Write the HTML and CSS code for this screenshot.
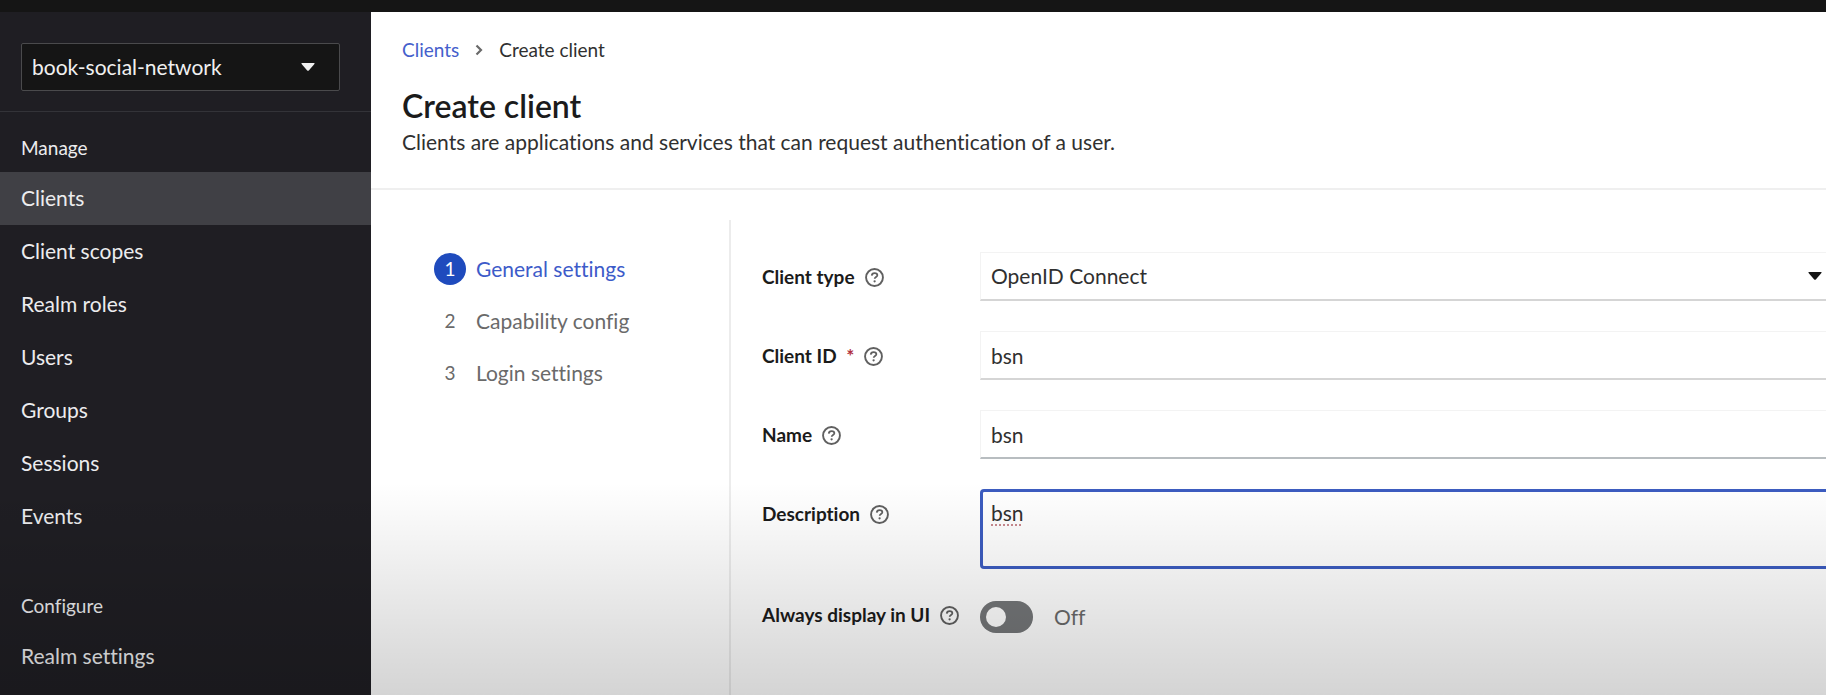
FILE: index.html
```html
<!DOCTYPE html>
<html lang="en">
<head>
<meta charset="utf-8">
<meta name="viewport" content="width=device-width, initial-scale=1">
<title>Create client</title>
<link rel="stylesheet" href="styles.css">
</head>
<body>
<svg class="sprite" aria-hidden="true">
  <symbol id="help" viewBox="0 0 18 18">
    <circle cx="9" cy="9" r="8" fill="none" stroke="currentColor" stroke-width="1.8"/>
    <path d="M6.4 7.2C6.5 5.6 7.6 4.8 9.1 4.8s2.6.8 2.6 2.1c0 1.7-2.5 1.7-2.5 3.4" fill="none" stroke="currentColor" stroke-width="1.7"/>
    <circle cx="9.1" cy="12.6" r="1.1" fill="currentColor"/>
  </symbol>
  <symbol id="caret" viewBox="0 0 14 8">
    <path d="M1 0h12q1 .3.4 1.1L7.8 7.5q-.8.7-1.6 0L.6 1.1Q0 .3 1 0z" fill="currentColor"/>
  </symbol>
</svg>
<div class="page">
  <div class="masthead"></div>
  <div class="body">
    <aside class="sidebar">
      <div class="realm">
        <button class="realm-button" type="button">book-social-network
          <svg class="caret" aria-hidden="true"><use href="#caret"/></svg>
        </button>
      </div>
      <nav class="nav">
        <h2 class="nav-title">Manage</h2>
        <a class="nav-link current" href="#clients" aria-current="page">Clients</a>
        <a class="nav-link" href="#client-scopes">Client scopes</a>
        <a class="nav-link" href="#realm-roles">Realm roles</a>
        <a class="nav-link" href="#users">Users</a>
        <a class="nav-link" href="#groups">Groups</a>
        <a class="nav-link" href="#sessions">Sessions</a>
        <a class="nav-link" href="#events">Events</a>
      </nav>
      <nav class="nav configure">
        <h2 class="nav-title">Configure</h2>
        <a class="nav-link" href="#realm-settings">Realm settings</a>
      </nav>
    </aside>
    <main class="main">
      <header class="header">
        <nav class="breadcrumb" aria-label="Breadcrumb">
          <a class="crumb-link" href="#clients">Clients</a>
          <svg class="chevron" viewBox="0 0 8 12" aria-hidden="true"><path d="M1.5 1.5 6 6l-4.500 4.500" fill="none" stroke="currentColor" stroke-width="2.200"/></svg>
          <span>Create client</span>
        </nav>
        <h1 class="title">Create client</h1>
        <p class="lead">Clients are applications and services that can request authentication of a user.</p>
      </header>
      <div class="wizard">
        <nav class="steps" aria-label="Wizard steps">
          <button class="step active" type="button"><span class="number">1</span>General settings</button>
          <button class="step" type="button"><span class="number">2</span>Capability config</button>
          <button class="step" type="button"><span class="number">3</span>Login settings</button>
        </nav>
        <form class="form">
          <div class="row">
            <div class="label"><label for="type">Client type</label><svg class="help" aria-hidden="true"><use href="#help"/></svg></div>
            <div class="select-wrap">
              <select class="control" id="type"><option>OpenID Connect</option></select>
              <svg class="caret select-caret" aria-hidden="true"><use href="#caret"/></svg>
            </div>
          </div>
          <div class="row">
            <div class="label"><label for="client-id">Client ID <span class="required">*</span></label><svg class="help" aria-hidden="true"><use href="#help"/></svg></div>
            <input class="control" id="client-id" type="text" value="bsn">
          </div>
          <div class="row">
            <div class="label"><label for="name">Name</label><svg class="help" aria-hidden="true"><use href="#help"/></svg></div>
            <input class="control hovered" id="name" type="text" value="bsn">
          </div>
          <div class="row">
            <div class="label"><label for="description">Description</label><svg class="help" aria-hidden="true"><use href="#help"/></svg></div>
            <textarea class="control description" id="description" spellcheck="false">bsn</textarea>
          </div>
          <div class="row switch-row">
            <div class="label"><label for="display">Always display in UI</label><svg class="help" aria-hidden="true"><use href="#help"/></svg></div>
            <div class="switch"><input class="toggle" id="display" type="checkbox" role="switch"><span>Off</span></div>
          </div>
        </form>
      </div>
    </main>
  </div>
</div>
</body>
</html>
```
FILE: styles.css
```css
* {
  box-sizing: border-box;
}

body {
  margin: 0;
  color: #303030;
  font: 21px/32px Lato, "Open Sans", sans-serif;
  font-variant-ligatures: none;
}

button,
input,
select,
textarea {
  font: inherit;
  font-variant-ligatures: none;
  color: inherit;
}

.sprite {
  display: none;
}

.page {
  position: relative;
  display: flex;
  flex-direction: column;
  min-height: 100vh;
}

/* Shade that darkens the bottom of the page */
.page::after {
  content: "";
  position: absolute;
  inset: auto 0 0;
  height: 212px;
  background: linear-gradient(transparent, rgb(0 0 0 / 17%));
  pointer-events: none;
}

.masthead {
  height: 12px;
  background: #151515;
}

.body {
  display: flex;
  flex: 1;
}

/* Sidebar */
.sidebar {
  flex: none;
  width: 371px;
  background: #1f1e23;
  color: #ececee;
}

.realm {
  padding: 31px 31px 20px 21px;
  border-bottom: 1px solid #333338;
}

.realm-button {
  display: flex;
  align-items: center;
  justify-content: space-between;
  width: 100%;
  height: 48px;
  padding: 0 24px 0 10px;
  border: 1px solid #4a4a4c;
  border-radius: 2px;
  background: #151515;
  color: #f0f0f0;
}

.caret {
  width: 14px;
  height: 8px;
}

.nav {
  display: flex;
  flex-direction: column;
  padding-top: 20px;
}

.configure {
  padding-top: 47px;
}

.nav-title {
  margin: 0;
  padding: 0 21px 8px;
  font-size: 19px;
  font-weight: 400;
}

.nav-link {
  padding: 10px 21px 11px;
  color: inherit;
  text-decoration: none;
}

.current {
  background: #404045;
}

/* Page header */
.main {
  display: flex;
  flex: 1;
  flex-direction: column;
  min-width: 0;
  background: #fff;
}

.header {
  padding: 22px 31px 30px;
  border-bottom: 2px solid #efefef;
}

.breadcrumb {
  display: flex;
  align-items: center;
  gap: 16px;
  font-size: 19px;
}

.crumb-link {
  color: #4560cc;
  text-decoration: none;
}

.chevron {
  width: 8px;
  height: 12px;
  color: #6a6a6a;
}

.title {
  margin: 20px 0 0;
  color: #1b1b1b;
  font-size: 32px;
  font-weight: 600;
  line-height: 40px;
}

.lead {
  margin: 0;
}

/* Wizard */
.wizard {
  display: flex;
  flex: 1;
  padding-top: 30px;
}

.steps {
  display: flex;
  flex: none;
  flex-direction: column;
  gap: 20px;
  width: 360px;
  padding: 33px 0 0 63px;
  border-right: 2px solid #ececec;
}

.step {
  display: flex;
  align-items: center;
  gap: 10px;
  padding: 0;
  border: 0;
  background: none;
  color: #6a6a6a;
}

.number {
  width: 32px;
  border-radius: 50%;
  font-size: 19px;
  text-align: center;
}

.active {
  color: #3d5bc9;
}

.active .number {
  background: #1f4bbd;
  color: #fff;
}

.form {
  display: flex;
  flex: 1;
  flex-direction: column;
  gap: 30px;
  min-width: 0;
  padding: 32px 0 30px 31px;
}

.row {
  display: grid;
  grid-template-columns: 218px 1fr;
  align-items: start;
}

.label {
  display: flex;
  align-items: center;
  gap: 10px;
  padding-top: 9px;
  color: #1b1b1b;
  font-size: 19px;
  font-weight: 700;
  white-space: nowrap;
}

.required {
  margin-left: 5px;
  color: #b03040;
}

.help {
  width: 19px;
  height: 19px;
  color: #606060;
}

.control {
  display: block;
  width: 100%;
  height: 49px;
  padding: 0 10px;
  border: 1px solid #f3f3f3;
  border-right: 0;
  border-bottom: 2px solid #d5d5d5;
  border-radius: 0;
  outline: 0;
  appearance: none;
  background: transparent;
}

.hovered {
  border-bottom: 2px solid #b8bdc0;
}

.select-wrap {
  position: relative;
}

.select-caret {
  position: absolute;
  top: 20px;
  right: 4px;
  color: #151515;
}

.description {
  height: 80px;
  padding: 5px 8px;
  border: 3px solid #3c5cc0;
  border-right: 0;
  border-radius: 4px 0 0 4px;
  resize: none;
  text-decoration: underline dotted 2px #c98a90;
  text-underline-offset: 3px;
}

.switch-row .label {
  padding-top: 0;
}

.switch {
  display: flex;
  align-items: center;
  gap: 21px;
  padding-top: 2px;
  color: #6a6a6a;
}

.toggle {
  display: flex;
  align-items: center;
  width: 53px;
  height: 32px;
  margin: 0;
  padding: 0 6px;
  border-radius: 16px;
  appearance: none;
  background: #747678;
}

.toggle::before {
  content: "";
  width: 20px;
  height: 20px;
  border-radius: 50%;
  background: #fff;
}

.toggle:checked {
  justify-content: end;
  background: #1f4bbd;
}
```
